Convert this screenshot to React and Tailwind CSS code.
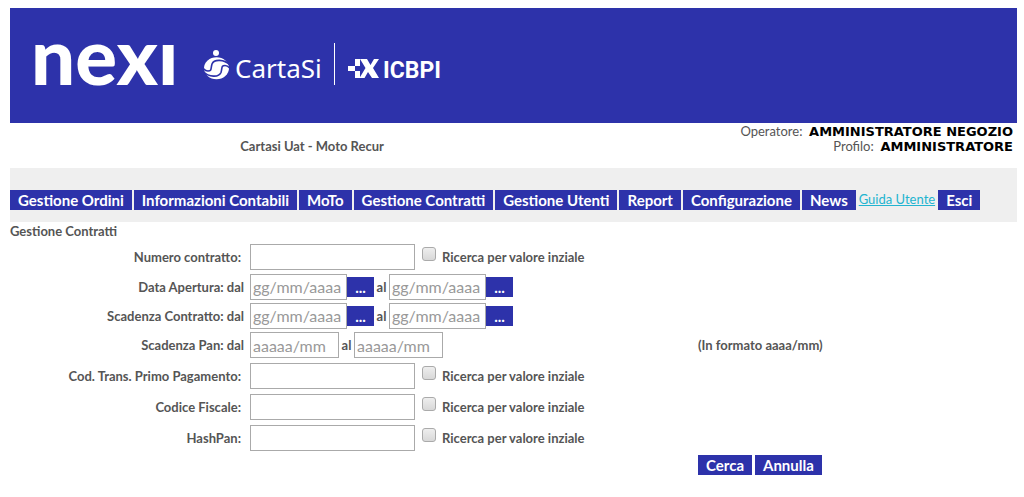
import React from 'react';

const menu = [
  'Gestione Ordini',
  'Informazioni Contabili',
  'MoTo',
  'Gestione Contratti',
  'Gestione Utenti',
  'Report',
  'Configurazione',
  'News',
];

const Button = ({ children, className = 'px-2', ...props }) => (
  <button
    type="button"
    className={`h-5 shrink-0 bg-[#2d32aa] text-[15px] leading-5 font-bold text-white whitespace-nowrap ${className}`}
    {...props}
  >
    {children}
  </button>
);

const Logo = () => (
  <svg
    className="h-[115px] w-[420px]"
    viewBox="-10 -33 420 115"
    fill="#fff"
    role="img"
    aria-label="Nexi, CartaSi, ICBPI"
  >
    <text x="-4" y="44" fontFamily="Lato" fontWeight="900" fontSize="78">
      nexı
    </text>
    {/* CartaSi mark */}
    <circle cx="181" cy="12" r="3" />
    <ellipse cx="181.5" cy="27.3" rx="12.5" ry="11" />
    <g fill="none" stroke="#2d32aa" strokeWidth="1.6">
      <path d="M195 24 C189 18 179 18 177 23 C175.500 28 177 30 173 30 C170 30 169 28 168 27" />
      <path d="M168 30.500 C174 36.500 184 36.500 186 31.500 C187.500 26.500 186 24.500 190 24.500 C193 24.500 194 26.500 195 27.500" />
    </g>
    <text x="200" y="37" fontFamily="Noto Sans" fontSize="26">
      CartaSi
    </text>
    <rect x="299" y="2" width="1" height="42" />
    {/* ICBPI mark */}
    <path d="M313 25h7v5h-7z M320 18h5v7h-5z M320 30h5v7h-5z" />
    <path d="M325 18h7l3.500 6 3.500-6h5l-6 9 6 10h-7l-4-6-3.500 6h-5l6-10z" />
    <text x="348" y="37" fontFamily="Roboto" fontWeight="700" fontSize="23">
      ICBPI
    </text>
  </svg>
);

const input =
  'h-[26px] border border-[#aaa] bg-white px-[2px] text-[16px] font-normal text-[#555] placeholder:text-[#999] outline-none';

const TextRow = ({ id, label }) => (
  <>
    <label htmlFor={id} className="pr-[9px] text-right">
      {label}
    </label>
    <div className="flex h-[31px] items-center">
      <input id={id} type="text" className={`${input} w-[165px]`} />
      <input
        id={`${id}-iniziale`}
        type="checkbox"
        className="mr-[6px] mb-[6px] ml-[7px] h-[14px] w-[14px] appearance-none rounded-[3px] border border-[#aaa] bg-linear-to-b from-[#eee] to-[#d8d8d8]"
      />
      <label htmlFor={`${id}-iniziale`}>Ricerca per valore inziale</label>
    </div>
    <div />
  </>
);

const DateRow = ({ id, label }) => (
  <>
    <label htmlFor={id} className="pr-[6px] text-right">
      {label}
    </label>
    <div className="flex h-[29px] items-center">
      <input id={id} type="text" placeholder="gg/mm/aaaa" className={`${input} w-[97px]`} />
      <Button aria-label="Calendario dal" className="w-[27px]">...</Button>
      <label htmlFor={`${id}-al`} className="w-[15px] text-center">al</label>
      <input id={`${id}-al`} type="text" placeholder="gg/mm/aaaa" className={`${input} w-[97px]`} />
      <Button aria-label="Calendario al" className="w-[27px]">...</Button>
    </div>
    <div />
  </>
);

const App = () => {
  return (
    <div className="pt-2 pr-[7px] pl-[10px] font-['Lato',sans-serif] text-[#555]">
      <header className="bg-[#2d32aa] pl-[15px]">
        <Logo />
      </header>
      <div className="flex h-[45px] justify-between">
        <div className="w-[60%] pt-[13px] text-center text-[13px] leading-5 font-bold">
          Cartasi Uat - Moto Recur
        </div>
        <div className="pt-[1px] pr-1 text-right text-[13px] leading-[15px]">
          <p>
            Operatore:&nbsp;{' '}
            <b className="font-['DejaVu_Sans',sans-serif] text-black">AMMINISTRATORE NEGOZIO</b>
          </p>
          <p>
            Profilo:&nbsp;{' '}
            <b className="font-['DejaVu_Sans',sans-serif] text-black">AMMINISTRATORE</b>
          </p>
        </div>
      </div>
      <nav className="flex h-[54px] items-center gap-[2px] bg-[#efefef] pt-[10px]">
        {menu.map(item => (
          <Button key={item}>{item}</Button>
        ))}
        <a href="#guida" className="px-px text-[13px] whitespace-nowrap text-[#22b4d0] underline">
          Guida Utente
        </a>
        <Button>Esci</Button>
      </nav>
      <main>
        <h1 className="h-[19px] text-[13px] leading-[19px] font-bold">Gestione Contratti</h1>
        <form className="grid grid-cols-[240px_448fr_319fr] items-center text-[13px] leading-4 font-bold">
          <TextRow id="contratto" label="Numero contratto:" />
          <DateRow id="apertura" label="Data Apertura: dal" />
          <DateRow id="scadenza" label="Scadenza Contratto: dal" />
          <label htmlFor="pan" className="pr-[6px] text-right">
            Scadenza Pan: dal
          </label>
          <div className="flex h-[30px] items-center">
            <input id="pan" type="text" placeholder="aaaaa/mm" className={`${input} w-[89px]`} />
            <label htmlFor="pan-al" className="w-[15px] text-center">al</label>
            <input id="pan-al" type="text" placeholder="aaaaa/mm" className={`${input} w-[89px]`} />
          </div>
          <div>(In formato aaaa/mm)</div>
          <TextRow id="pagamento" label="Cod. Trans. Primo Pagamento:" />
          <TextRow id="fiscale" label="Codice Fiscale:" />
          <TextRow id="hashpan" label="HashPan:" />
          <div className="col-start-3 flex gap-[3px] pt-[2px]">
            <Button>Cerca</Button>
            <Button>Annulla</Button>
          </div>
        </form>
      </main>
    </div>
  );
};

export default App;
